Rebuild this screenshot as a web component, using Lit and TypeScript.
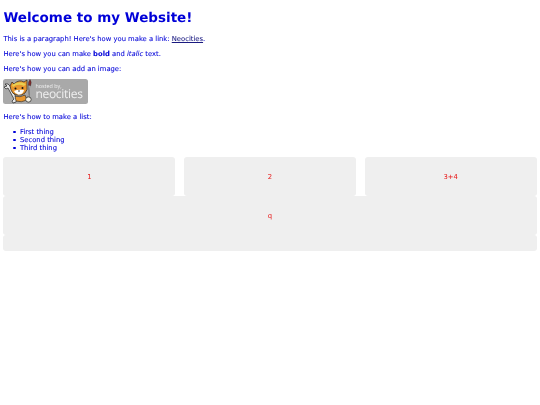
import { LitElement, html, css } from "lit";
import { customElement } from "lit/decorators.js";

@customElement("app-root")
export class AppRoot extends LitElement {
  static styles = css`
    :host { display: block; min-height: 405px; background: #fff; color: #0000d8; font-family: "DejaVu Sans", sans-serif; font-size: 6.8px; line-height: 8px; text-rendering: geometricPrecision; }
    .page { padding: 0 3.4px; display: flow-root; filter: blur(0.25px); }
    h1 { margin: 10px 0 9px; font-size: 13.5px; line-height: 16px; font-weight: 700; }
    p, li { -webkit-text-stroke: 0.08px currentColor; }
    p { margin: 0 0 7px; }
    .before-badge { margin-bottom: 6px; }
    a { color: #1a1a80; text-decoration: underline; }
    .badge { display: flex; width: 85px; height: 25px; margin: 0 0 9px; background: #a9a9a9; border-radius: 2.5px; position: relative; color: #f0f0f0; }
    .badge svg { position: absolute; left: 0; top: 0; }
    .badge .txt { margin-left: 32px; display: flex; flex-direction: column; font-family: "Open Sans", sans-serif; }
    .hosted { font-size: 5.4px; line-height: 6px; margin-top: 3.5px; }
    .neo { font-size: 12px; line-height: 11px; letter-spacing: -0.3px; margin-top: -0.5px; }
    ul { margin: 0 0 5px; padding: 0 0 0 10px; list-style: none; }
    li { display: flex; align-items: center; gap: 4.2px; }
    li::before { content: ""; width: 2.4px; height: 2.4px; border-radius: 50%; background: currentColor; }
    .grid { display: grid; grid-template-columns: repeat(3, 172px); column-gap: 8.6px; grid-template-rows: 39px 39px 16px; color: #e81818; }
    .cell { background: #efefef; border-radius: 3px; display: flex; align-items: center; justify-content: center; }
    .wide { grid-column: 1 / 4; }
  `;
  render() {
    return html`<div class="page">
      <h1>Welcome to my Website!</h1>
      <p>This is a paragraph! Here's how you make a link: <a href="#">Neocities</a>.</p>
      <p>Here's how you can make <b>bold</b> and <i>italic</i> text.</p>
      <p class="before-badge">Here's how you can add an image:</p>
      <div class="badge">
        <svg width="32" height="25" viewBox="0 0 32 25">
          <path d="M1 8 L3 10 L5 9 L11 20 L9 22 L10 24 L13 23 L14 20 L7 7 L5 5 L2 5 L4 7Z" fill="#e8e8e8" stroke="#222" stroke-width=".7"/>
          <path d="M7 7 L9 3 L11 5 Q16 0 21 3 L24 1 L24 6 Q25 11 22 14 Q19 17 14 16 Q9 15 8 11Z" fill="#e8962e" stroke="#222" stroke-width=".7"/>
          <path d="M9 6 Q16 1 23 5 L21 7 Q15 4 10 8Z" fill="#e8cf50"/>
          <path d="M11 12 Q15 10 21 11 Q20 16 15 15.6 Q12 15 11 12Z" fill="#fff"/>
          <circle cx="12.5" cy="9.5" r="1" fill="#111"/><circle cx="19.5" cy="9" r="1" fill="#111"/>
          <path d="M15 12 L17 12" stroke="#222" stroke-width=".8"/>
          <path d="M12 17 Q17 19 22 16 L24 21 Q18 24 13 22Z" fill="#e8962e" stroke="#222" stroke-width=".6"/>
          <path d="M26.5 6 L25.5 19" stroke="#333" stroke-width="1.5"/>
          <path d="M26.5 6 L25.5 19" stroke="#eee" stroke-width=".7"/>
          <path d="M27 0.5 Q29 3 27.6 6.5 L25.4 6.2 Q25 3 27 .5Z" fill="#8c2a2a" stroke="#222" stroke-width=".4"/>
          <ellipse cx="25.4" cy="20.5" rx="2.8" ry="2.6" fill="#f4f0e4" stroke="#222" stroke-width=".7"/>
        </svg>
        <div class="txt"><span class="hosted">hosted by,</span><span class="neo">neocities</span></div>
      </div>
      <p>Here's how to make a list:</p>
      <ul><li>First thing</li><li>Second thing</li><li>Third thing</li></ul>
      <div class="grid">
        <div class="cell">1</div><div class="cell">2</div><div class="cell">3+4</div>
        <div class="cell wide">q</div>
        <div class="cell wide"></div>
      </div>
    </div>`;
  }
}
